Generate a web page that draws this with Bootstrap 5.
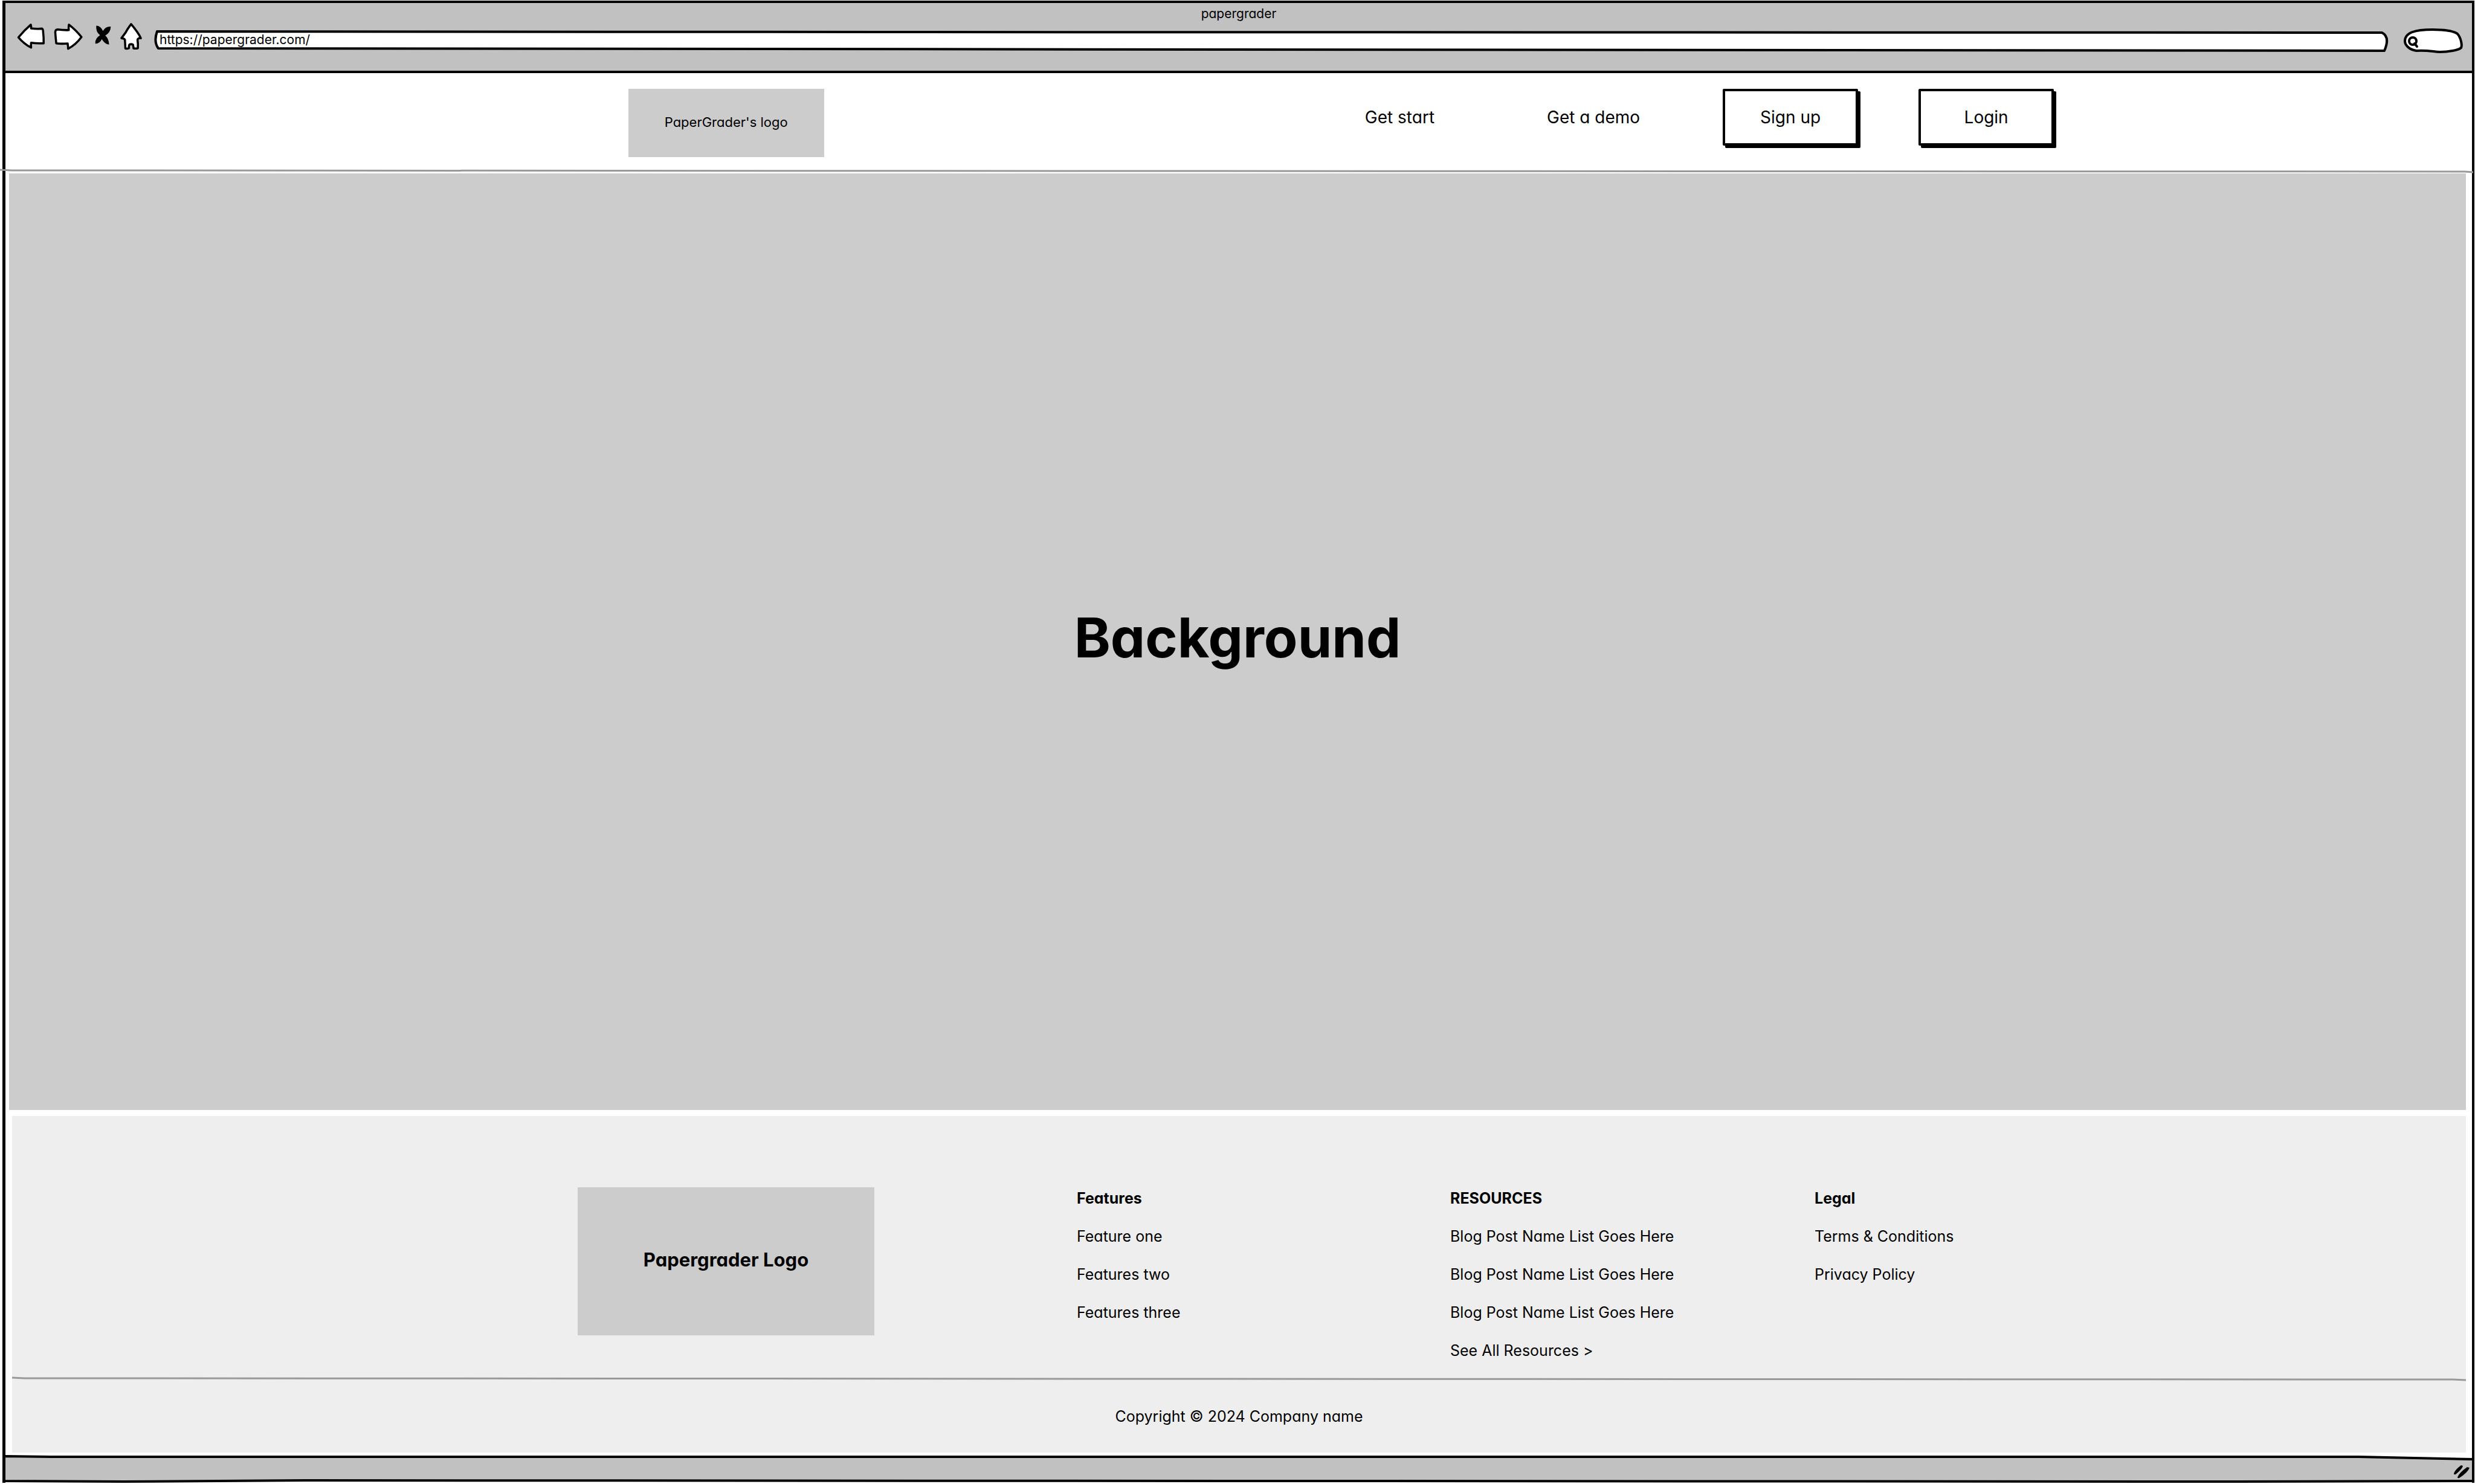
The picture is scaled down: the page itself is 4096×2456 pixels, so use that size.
<!DOCTYPE html>
<html lang="en">
<head>
<meta charset="utf-8">
<meta name="viewport" content="width=device-width, initial-scale=1">
<title>papergrader</title>
<link href="https://cdn.jsdelivr.net/npm/bootstrap@5.3.0/dist/css/bootstrap.min.css" rel="stylesheet">
<style>
  body { font-family: Inter, "Open Sans", sans-serif; font-feature-settings: "cv11"; color: #000; background: #fff; }
  a { color: #000; text-decoration: none; }
  .stretch { position: absolute; inset: 0; width: 100%; height: 100%; overflow: visible; }
  .stretch path, .rule path { vector-effect: non-scaling-stroke; }

  /* browser window */
  .window { margin: 1px 1px 2px 4px; border: 4px solid #000; border-left-width: 5px; border-bottom: 0; min-height: calc(100vh - 3px); }
  .chrome { background: #c1c1c1; border-bottom: 4px solid #000; height: 116px; }
  .chrome-title { font-size: 21px; line-height: 28px; padding-top: 4px; }
  .tools { padding: 0 15px 0 19px; gap: 14px; height: 52px; }
  .tool { border: 0; background: none; padding: 0; }
  .tool svg { display: block; height: 48px; }
  .ink { fill: #fff; stroke: #000; stroke-width: 13; stroke-linejoin: round; stroke-linecap: round; }
  .address { margin: 0 10px 0 5px; height: 52px; }
  .find { width: 98px; height: 52px; }
  .address input, .find input { position: relative; border: 0; background: transparent; width: 100%; height: 52px; outline: 0; color: #000; font-size: 21px; padding: 5px 20px 0 9px; }
  .find input { padding-left: 28px; padding-right: 8px; }

  /* header */
  .site-head { padding: 26px 16.95% 20px 25.25%; }
  .logo-sm { width: 324px; height: 113px; background: #ccc; font-size: 22px; padding-bottom: 2px; }
  .head-nav { font-size: 28px; line-height: 94px; gap: 137px; }
  .head-links { gap: 186px; }
  .head-buttons { gap: 100px; }
  .btn-sketch { width: 224px; height: 94px; padding: 0; border: 4px solid #000; border-radius: 2px; background: #fff; color: #000; font-size: 28px; line-height: 86px; box-shadow: 4px 4px 0 #000; }
  .rule { display: block; height: 6px; overflow: visible; }
  .rule path { fill: none; stroke: #999; stroke-width: 3px; }
  .rule-wide { margin: 0 -4px 0 -9px; width: calc(100% + 13px); }

  /* hero and footer */
  .hero { background: #ccc; margin: 1px 10px 10px 6px; padding-bottom: 12px; }
  .hero h1 { font-size: 91px; font-weight: 700; }
  .site-foot { background: #eee; margin: 0 10px 5px 11px; }
  .foot-grid { display: grid; grid-template-columns: 936fr 826fr 618fr 603fr 1078fr; padding: 105px 0 12px; font-size: 25px; line-height: 63px; }
  .foot-grid h2 { font-size: 25px; line-height: 63px; font-weight: 700; }
  .logo-lg { grid-column: 2; width: 491px; height: 245px; margin-top: 13px; background: #ccc; font-size: 31px; font-weight: 700; padding-bottom: 6px; }
  .copyright { font-size: 25px; line-height: 119px; }
  .status { height: 45px; margin-left: -5px; margin-right: -4px; }
</style>
<script src="https://cdn.jsdelivr.net/npm/bootstrap@5.3.0/dist/js/bootstrap.bundle.min.js"></script>
</head>
<body>
<div class="window d-flex flex-column">

  <div class="chrome">
    <div class="chrome-title text-center">papergrader</div>
    <div class="tools d-flex align-items-start">
      <button class="tool" type="button" aria-label="Back">
        <svg width="47" viewBox="44 30 172 176"><path class="ink" d="M53 121Q88 78 128 44Q131 56 130 67Q165 71 197 68Q203 72 203 90Q207 120 206 157Q165 159 130 154Q128 168 130 183Q88 162 53 121Z"/></svg>
      </button>
      <button class="tool" type="button" aria-label="Forward">
        <svg width="48" viewBox="266 30 176 176"><path class="ink" d="M434 119Q400 76 358 44Q355 60 357 77Q320 78 290 73Q275 74 275 90Q278 130 281 157Q315 162 350 158Q353 175 353 190Q400 166 434 119Z"/></svg>
      </button>
      <button class="tool" type="button" aria-label="Stop">
        <svg width="33" viewBox="492 30 120 176"><path d="M522 50Q548 50 563 82Q579 53 610 56Q609 92 577 110Q598 130 600 165Q572 162 556 132Q543 160 516 159Q513 128 545 108Q518 88 522 50Z"/></svg>
      </button>
      <button class="tool" type="button" aria-label="Home">
        <svg width="38" viewBox="662 30 140 176"><path class="ink" d="M732 40Q708 72 699 91L673 126Q688 126 694 135L697 188Q707 192 719 187Q717 170 723 164Q734 161 743 165Q746 178 747 188Q760 191 773 187Q775 160 771 135Q776 124 791 126Q780 98 732 40Z"/></svg>
      </button>
      <div class="address position-relative flex-grow-1">
        <svg class="stretch" viewBox="0 0 3698 52" preserveAspectRatio="none"><path d="M5 15L1200 16L3686 17Q3700 24 3690 47L7 43Q-1 32 5 15Z" fill="#fff" stroke="#000" stroke-width="4" stroke-linejoin="round"/></svg>
        <input type="text" value="https://papergrader.com/" aria-label="Address">
      </div>
      <div class="find position-relative">
        <svg class="stretch" viewBox="0 0 98 52"><path d="M21 47C8 45 2 37 2 31C2 17 18 12 48 12C66 12 82 14 89 19C95 26 97 38 95 42C91 46 73 49 60 49C46 48 38 46 21 47Z" fill="#fff" stroke="#000" stroke-width="4"/><circle cx="15" cy="31" r="6" fill="none" stroke="#000" stroke-width="4"/><path d="M18 35L22 40" stroke="#000" stroke-width="4" stroke-linecap="round"/></svg>
        <input type="text" aria-label="Search">
      </div>
    </div>
  </div>

  <header class="site-head d-flex justify-content-between align-items-start">
    <a href="#" class="logo-sm d-flex align-items-center justify-content-center">PaperGrader's logo</a>
    <nav class="head-nav d-flex">
      <div class="head-links d-flex">
        <a href="#">Get start</a>
        <a href="#">Get a demo</a>
      </div>
      <div class="head-buttons d-flex">
        <button type="button" class="btn-sketch">Sign up</button>
        <button type="button" class="btn-sketch">Login</button>
      </div>
    </nav>
  </header>
  <svg class="rule rule-wide" viewBox="0 0 4096 6" preserveAspectRatio="none"><path d="M0 1L20 2L2000 3L4080 4L4094 5"/></svg>

  <main class="hero flex-grow-1 d-flex align-items-center justify-content-center">
    <h1 class="m-0">Background</h1>
  </main>

  <footer class="site-foot">
    <div class="foot-grid">
      <a href="#" class="logo-lg d-flex align-items-center justify-content-center">Papergrader Logo</a>
      <section>
        <h2 class="m-0">Features</h2>
        <ul class="list-unstyled m-0">
          <li><a href="#">Feature one</a></li>
          <li><a href="#">Features two</a></li>
          <li><a href="#">Features three</a></li>
        </ul>
      </section>
      <section>
        <h2 class="m-0">RESOURCES</h2>
        <ul class="list-unstyled m-0">
          <li><a href="#">Blog Post Name List Goes Here</a></li>
          <li><a href="#">Blog Post Name List Goes Here</a></li>
          <li><a href="#">Blog Post Name List Goes Here</a></li>
          <li><a href="#">See All Resources &gt;</a></li>
        </ul>
      </section>
      <section>
        <h2 class="m-0">Legal</h2>
        <ul class="list-unstyled m-0">
          <li><a href="#">Terms &amp; Conditions</a></li>
          <li><a href="#">Privacy Policy</a></li>
        </ul>
      </section>
    </div>
    <svg class="rule w-100" viewBox="0 0 4062 6" preserveAspectRatio="none"><path d="M0 1L20 2L2000 3L4040 4L4062 5"/></svg>
    <p class="copyright text-center m-0">Copyright © 2024 Company name</p>
  </footer>

  <div class="status position-relative">
    <svg class="stretch" viewBox="0 0 4091 45" preserveAspectRatio="none"><path d="M3 1L80 2L3900 2L4089 6L4089 42L3700 43L500 41L200 43L3 42Z" fill="#c1c1c1" stroke="#000" stroke-width="4" stroke-linejoin="round"/></svg>
    <svg class="position-absolute end-0 top-0" width="46" height="45" viewBox="0 0 46 45"><path d="M12 30Q13 24 24 16L27 17Q26 22 15 31Q12 32 12 30ZM18 36Q20 29 34 19L38 20Q35 28 21 37Q18 38 18 36Z"/></svg>
  </div>
</div>
</body>
</html>
